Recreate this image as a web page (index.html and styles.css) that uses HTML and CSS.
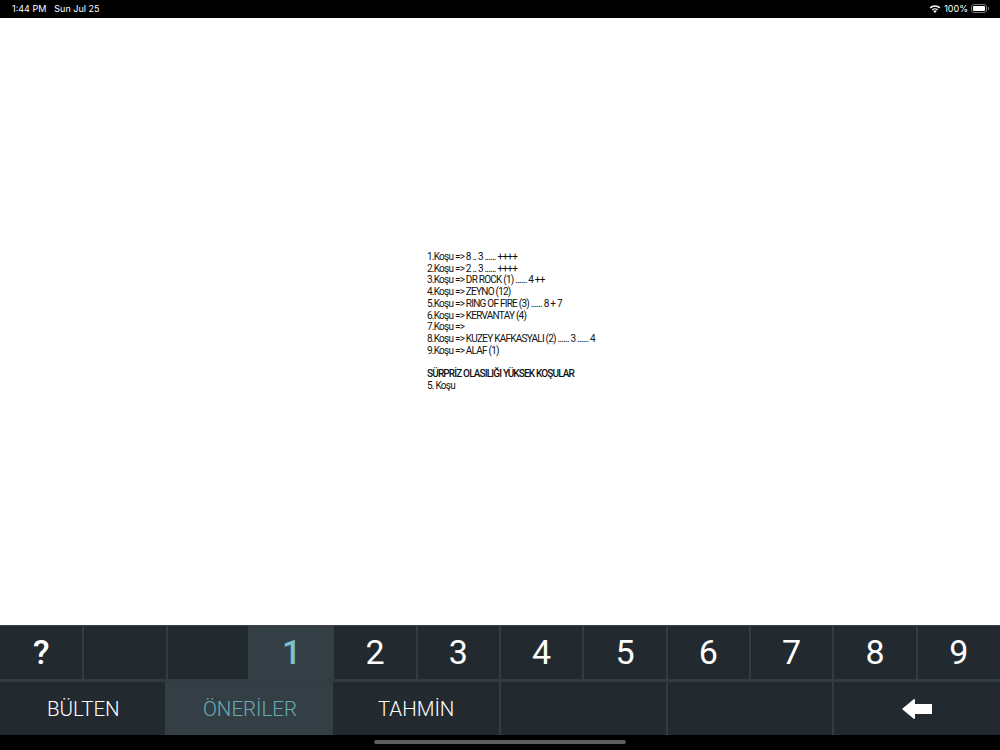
FILE: index.html
```html
<!DOCTYPE html>
<html lang="en">
<head>
    <meta charset="UTF-8">
    <meta name="viewport" content="width=device-width, initial-scale=1.0">
    <title>Öneriler</title>
    <link rel="stylesheet" href="styles.css">
</head>
<body>
    <!-- Status Bar -->
    <div class="status-bar">
        <div class="status-left">
            <span>1:44 PM</span>
            <span>Sun Jul 25</span>
        </div>
        <div class="status-right">
            <svg class="wifi" width="12" height="9" viewBox="0 0 12 9">
                <path d="M6 9 L4.2 7 A2.6 2.6 0 0 1 7.8 7 Z" fill="#fff"/>
                <path d="M2.9 5.6 A4.5 4.5 0 0 1 9.1 5.6 L8.3 6.4 A3.4 3.4 0 0 0 3.7 6.4 Z" fill="#fff"/>
                <path d="M0.6 3.3 A7.8 7.8 0 0 1 11.4 3.3 L10.3 4.5 A6.2 6.2 0 0 0 1.7 4.5 Z" fill="#fff"/>
            </svg>
            <span>100%</span>
            <div class="battery"><div class="battery-fill"></div></div>
            <div class="battery-cap"></div>
        </div>
    </div>

    <!-- Content -->
    <div class="content">
        <div class="tips">
            1.Koşu =&gt; 8 .. 3 ...... ++++<br>
            2.Koşu =&gt; 2 .. 3 ...... ++++<br>
            3.Koşu =&gt; DR ROCK (1) ...... 4 ++<br>
            4.Koşu =&gt; ZEYNO (12)<br>
            5.Koşu =&gt; RING OF FIRE (3) ...... 8 + 7<br>
            6.Koşu =&gt; KERVANTAY (4)<br>
            7.Koşu =&gt;<br>
            8.Koşu =&gt; KUZEY KAFKASYALI (2) ...... 3 ...... 4<br>
            9.Koşu =&gt; ALAF (1)<br>
            <br>
            <b>SÜRPRİZ OLASILIĞI YÜKSEK KOŞULAR</b><br>
            5. Koşu
        </div>
    </div>

    <!-- Race Buttons -->
    <div class="race-row">
        <div class="key bold first">?</div>
        <div class="key"></div>
        <div class="key no-right"></div>
        <div class="key bold active">1</div>
        <div class="key">2</div>
        <div class="key">3</div>
        <div class="key">4</div>
        <div class="key">5</div>
        <div class="key">6</div>
        <div class="key">7</div>
        <div class="key">8</div>
        <div class="key last">9</div>
    </div>

    <!-- Menu -->
    <div class="menu-row">
        <div class="tab first no-right">BÜLTEN</div>
        <div class="tab active">ÖNERİLER</div>
        <div class="tab no-left">TAHMİN</div>
        <div class="tab"></div>
        <div class="tab"></div>
        <div class="tab last">
            <svg width="30" height="20" viewBox="0 0 30 20">
                <path d="M0 10 L12 0 L13 0.5 L13 5 L30 5 L30 15 L13 15 L13 19.5 L12 20 Z" fill="#fff"/>
            </svg>
        </div>
    </div>

    <!-- Home Bar -->
    <div class="home-area">
        <div class="home-bar"></div>
    </div>
</body>
</html>
```

FILE: styles.css
```css
* {
    margin: 0;
    padding: 0;
    box-sizing: border-box;
}

body {
    width: 1000px;
    height: 750px;
    display: flex;
    flex-direction: column;
    overflow: hidden;
    background: #000;
    font-family: Roboto, sans-serif;
}

.status-bar {
    height: 18px;
    flex-shrink: 0;
    display: flex;
    justify-content: space-between;
    align-items: center;
    padding: 0 11px 1px 12px;
    background: #000;
    color: #fff;
    font-family: Inter, sans-serif;
    font-size: 9px;
}

.status-left {
    display: flex;
    gap: 8px;
}

.status-right {
    display: flex;
    align-items: center;
}

.wifi {
    margin-right: 3px;
}

.battery {
    width: 16px;
    height: 9px;
    margin-left: 3px;
    padding: 1px;
    border: 1px solid #777;
    border-radius: 3px;
}

.battery-fill {
    height: 100%;
    background: #fff;
    border-radius: 1px;
}

.battery-cap {
    width: 1px;
    height: 3px;
    margin-left: 1px;
    background: #777;
}

.content {
    flex: 1;
    padding: 233px 0 0 427px;
    background: #fff;
}

.tips {
    color: #111;
    font-size: 10px;
    line-height: 11.7px;
    letter-spacing: -0.76px;
}

.tips b {
    font-weight: 500;
    letter-spacing: -0.85px;
}

.race-row, .menu-row {
    display: grid;
    background: #222a30;
    color: #fff;
}

.race-row {
    grid-template-columns: repeat(12, 1fr);
    height: 57px;
    border-top: 1px solid #3a444a;
    border-bottom: 3px solid #323d43;
}

.menu-row {
    grid-template-columns: repeat(6, 1fr);
    height: 53px;
}

.key, .tab {
    display: flex;
    align-items: center;
    justify-content: center;
    border-left: 1px solid #323d43;
    border-right: 1px solid #323d43;
}

.key {
    padding-bottom: 1px;
    font-size: 34px;
}

.tab {
    font-size: 20.5px;
    font-weight: 300;
}

.bold {
    font-weight: 500;
}

.first, .no-left {
    border-left: none;
}

.last, .no-right {
    border-right: none;
}

.active {
    margin-left: -2px;
    padding-left: 2px;
    border: none;
    background: #333f45;
    color: #6aabb3;
}

.key.active {
    color: #7cc0c8;
}

.home-area {
    height: 15px;
    flex-shrink: 0;
    display: flex;
    justify-content: center;
    padding-top: 5px;
    background: #000;
}

.home-bar {
    width: 252px;
    height: 4px;
    border-radius: 2px;
    background: #5e5e5e;
}
```
